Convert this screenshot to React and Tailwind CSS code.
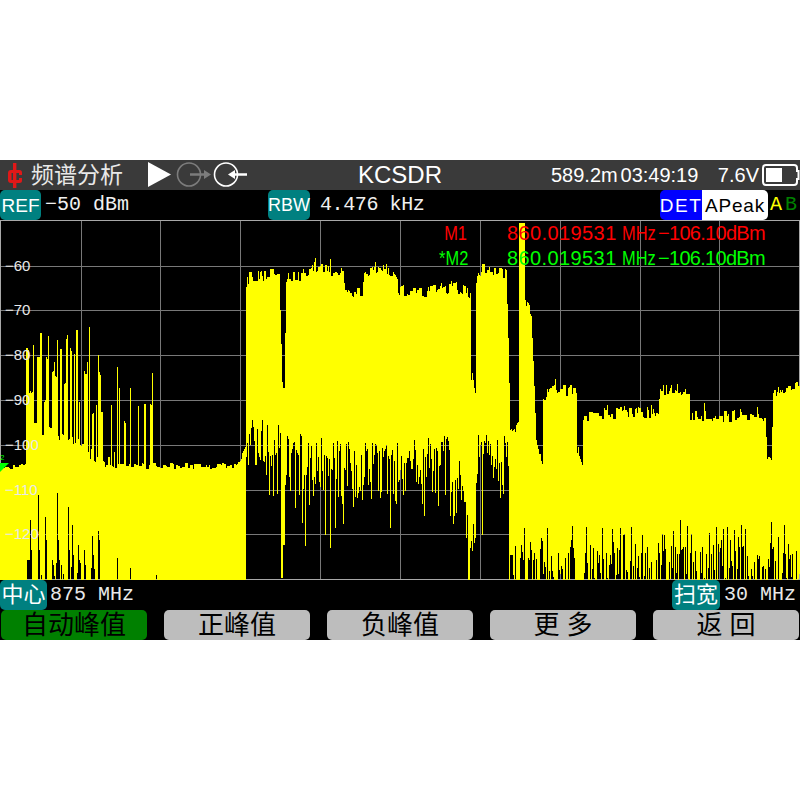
import React from "react";

const sans = "font-['Liberation_Sans','Noto_Sans_CJK_SC',sans-serif]";
const mono = "font-['Liberation_Mono','Noto_Sans_CJK_SC',monospace]";

function rng(seed) {
  let s = seed;
  return () => {
    s = (s * 16807) % 2147483647;
    return s / 2147483647;
  };
}

// [x, value] breakpoints, linear interpolation; values in chart pixels (y-220)
const interp = (pts, x) => {
  for (let i = 1; i < pts.length; i++) {
    if (x <= pts[i][0]) {
      const [a, b] = [pts[i - 1], pts[i]];
      return a[1] + ((b[1] - a[1]) * (x - a[0])) / Math.max(1, b[0] - a[0]);
    }
  }
  return pts[pts.length - 1][1];
};

const TOP = [
  [0, 248], [25, 246], [26, 214], [43, 208], [60, 216], [73, 222], [93, 233], [107, 241], [117, 246],
  [236, 246], [240, 240], [245, 228], [246, 70], [247, 58], [279, 54], [280, 90], [282, 165], [284, 165], [286, 58],
  [300, 55], [325, 48], [343, 55], [345, 72], [362, 74], [364, 55], [378, 48], [392, 55], [400, 70], [430, 72],
  [455, 66], [470, 76], [471, 155], [475, 170], [476, 60], [480, 50], [506, 52], [508, 120], [510, 215], [518, 205],
  [519, 90], [520, 85], [525, 85], [526, 83], [531, 90], [533, 135], [536, 217], [540, 235], [542, 240], [543, 175],
  [560, 170], [576, 170], [577, 230], [582, 245], [583, 195], [625, 192], [658, 192], [660, 172], [689, 170],
  [690, 196], [765, 196], [767, 240], [771, 242], [773, 175], [799, 168],
];
// lowest yellow edge of the main bands (chart pixels)
const BOT = [
  [0, 360], [245, 360], [246, 195], [279, 205], [286, 215], [300, 212], [340, 222], [400, 222],
  [450, 215], [462, 245], [470, 310], [475, 350], [476, 210], [508, 215], [509, 360],
];

// [from, to, top] comb of the left-hand signals
const SPIKES = [
  [26, 28, 128], [29, 32, 170], [33, 33, 122], [37, 39, 135], [40, 41, 110], [44, 45, 180], [46, 47, 135], [48, 48, 115],
  [52, 53, 150], [54, 54, 140], [55, 56, 155], [57, 57, 117], [60, 61, 126], [64, 65, 160], [66, 67, 115], [70, 71, 128],
  [74, 74, 132], [76, 77, 108], [79, 79, 180], [84, 86, 150], [87, 87, 141], [89, 89, 104], [92, 93, 190], [96, 96, 185],
  [98, 98, 132], [99, 100, 152], [101, 102, 190], [111, 111, 185], [117, 117, 144], [119, 119, 165], [125, 125, 200],
  [130, 130, 168], [138, 138, 184], [144, 145, 180], [150, 151, 181], [152, 152, 151], [124, 124, 200], [114, 114, 230],
  [519, 524, 3],
];
// black teeth rising from the bottom of the left area: [x, lowest yellow]
const TEETH = {
  27: 340, 29: 340, 30: 300, 31: 330, 38: 275, 39: 330, 45: 297, 46: 320, 52: 340, 53: 345, 57: 273, 58: 320, 61: 345,
  68: 287, 69: 330, 72: 305, 73: 335, 78: 325, 79: 340, 84: 330, 85: 345, 92: 316, 93: 335, 98: 311, 99: 320, 117: 338,
  130: 348, 156: 355,
};

function Spectrum() {
  const r = rng(48271);
  let d = "";
  let clump = 0;
  let hold = 0;
  for (let x = 0; x < 800; x++) {
    if (hold <= 0) {
      hold = 1 + Math.floor(r() * 3);
      clump = r();
    }
    hold--;
    let top = interp(TOP, x);
    const amp = x < 26 || (x >= 110 && x < 246) ? 6 : x < 110 ? 16 : 13;
    top += clump * amp - amp / 2;
    const sp = SPIKES.find((s) => x >= s[0] && x <= s[1]);
    if (sp) top = sp[0] === 519 ? sp[2] : sp[2] + r() * 4;
    if (x > 246 && x < 509 && r() < 0.12) top -= r() * 9;
    if (x > 543 && r() < 0.1) top -= r() * 9;

    let bot = interp(BOT, x);
    if (x < 246) {
      bot = TEETH[x] || 360;
      if (!TEETH[x] && x > 26 && x < 100 && r() < 0.25) bot = 338 + r() * 22;
    } else if (x < 509) {
      bot += r() * 22;
      const q = r();
      if (q < 0.45) bot += 10 + r() * 35;
      else if (q < 0.55) bot += 35 + r() * 40;
      else if (q < 0.57) bot += 60 + r() * 50;
      if (x === 281 || x === 282) bot = 358;
      if (x === 283 || x === 284) bot = 325;
      if (x === 285) bot = 265;
      if (x >= 470 && x <= 475) bot = 300 + r() * 55;
    } else {
      bot = 360;
      if (x >= 510 && x <= 512) bot = 335;
      const q = r();
      if (x > 512) {
        if (q < 0.45) bot = 325 + r() * 35;
        else if (q < 0.6) bot = 305 + r() * 30;
        else if (q < 0.64) bot = 295 + r() * 20;
      }
      if (x >= 576 && x <= 582) bot = 360;
    }
    d += `M${x + 0.5} ${top.toFixed(0)}V${bot.toFixed(0)}`;
  }
  return <path d={d} stroke="#ffff00" strokeWidth="1" shapeRendering="crispEdges" fill="none" />;
}

const H = [46, 90, 135, 180, 225, 270, 314];
const V = [81, 160, 240, 320, 400, 480, 560, 640, 719];
const AXIS = [
  ["−60", 46], ["−70", 90], ["−80", 135], ["−90", 180], ["−100", 225], ["−110", 270], ["−120", 314],
];

function MarkerRow({ name, className }) {
  return (
    <div className={`absolute left-[433px] flex items-baseline whitespace-nowrap text-[20px] leading-[24px] ${sans} ${className}`}>
      <span className="w-[34px] origin-right scale-x-[0.82] text-right">{name}</span>
      <span className="ml-[40px] w-[115px] tracking-[0.4px]">860.019531</span>
      <span className="w-[36px] origin-left scale-x-[0.82]">MHz</span>
      <span className="tracking-[-0.7px]">−106.10dBm</span>
    </div>
  );
}

function Chart() {
  return (
    <div className="relative h-[360px] w-full overflow-hidden bg-black">
      <svg width="800" height="360" viewBox="0 0 800 360" className="block">
        <rect x="0" y="0" width="800" height="1" fill="#a8a8a8" />
        <rect x="0" y="359" width="800" height="1" fill="#a8a8a8" />
        <rect x="0" y="0" width="1" height="360" fill="#a8a8a8" />
        <rect x="799" y="0" width="1" height="360" fill="#a8a8a8" />
        <g fill="#787878" shapeRendering="crispEdges">
          {H.map((y) => <rect key={y} x="1" y={y} width="798" height="1" />)}
          {V.map((x) => <rect key={x} x={x} y="1" width="1" height="358" />)}
        </g>
        <Spectrum />
        <path d="M0 243L9 243L0 252Z" fill="#00ff00" />
      </svg>
      <span className={`absolute left-0 top-[234px] text-[8px] leading-none text-[#00ff00] ${sans}`}>2</span>
      {AXIS.map(([t, y]) => (
        <span
          key={t}
          className={`absolute left-[5px] text-[15px] leading-none text-[#e8e8e8] ${sans}`}
          style={{ top: y - 8 }}
        >
          {t}
        </span>
      ))}
      <MarkerRow name="M1" className="top-[1px] text-[#ff0000]" />
      <MarkerRow name="*M2" className="top-[26px] text-[#00ff00]" />
    </div>
  );
}

function Logo() {
  return (
    <svg width="18" height="28" viewBox="0 0 18 28" className="ml-[6px] shrink-0">
      <g fill="#e01818">
        <rect x="7" y="2" width="3.4" height="25" />
        <path d="M8 9H5a3 3 0 0 0-3 3v7a3 3 0 0 0 3 3h3v-3H5.5v-7H8Z" />
        <path d="M10 9h3.5a2.5 2.5 0 0 1 2.5 2.5V14h-3v-2h-3Zm0 13h3.5a2.5 2.5 0 0 0 2.5-2.5V17h-3v2h-3Z" />
      </g>
    </svg>
  );
}

function StatusIcons() {
  return (
    <svg width="100" height="30" viewBox="0 0 100 30" className="ml-[25px] shrink-0">
      <path d="M0 2L23 14.5L0 27Z" fill="#ffffff" />
      <circle cx="41" cy="14.5" r="11.5" fill="none" stroke="#7c7c7c" strokeWidth="1.6" />
      <path d="M42 14.5H57" stroke="#7c7c7c" strokeWidth="2.5" />
      <path d="M56 10L63 14.5L56 19Z" fill="#7c7c7c" />
      <circle cx="78" cy="14.5" r="11.5" fill="none" stroke="#ffffff" strokeWidth="1.6" />
      <path d="M85 14.5H99" stroke="#ffffff" strokeWidth="2.5" />
      <path d="M87 10L80 14.5L87 19Z" fill="#ffffff" />
    </svg>
  );
}

function Battery() {
  return (
    <svg width="38" height="22" viewBox="0 0 38 22" className="ml-[3px] shrink-0">
      <path d="M32 1H4a3 3 0 0 0-3 3v14a3 3 0 0 0 3 3h28a3 3 0 0 0 3-3v-3h1.5V7H35V4a3 3 0 0 0-3-3Z" fill="none" stroke="#ffffff" strokeWidth="2" />
      <rect x="4" y="4" width="16" height="14" fill="#ffffff" />
    </svg>
  );
}

const Badge = ({ children, className = "" }) => (
  <div className={`flex h-[30px] items-center justify-center whitespace-nowrap rounded-[5px] bg-[#008080] text-white ${className}`}>
    {children}
  </div>
);

const BUTTONS = ["自动峰值", "正峰值", "负峰值", "更 多", "返 回"];

export default function App() {
  return (
    <div className={`flex h-[800px] w-[800px] items-center bg-white ${sans}`}>
      <div className="flex h-[480px] w-[800px] flex-col bg-black">
        {/* title bar */}
        <div className="flex h-[30px] items-center whitespace-nowrap bg-[#3a3a3a] text-white">
          <Logo />
          <span className="ml-[7px] w-[92px] text-[23px] leading-none text-[#e8e8e8]">频谱分析</span>
          <StatusIcons />
          <span className="ml-[110px] w-[83px] text-[24px] leading-none">KCSDR</span>
          <span className="ml-[110px] w-[70px] text-[20px] leading-none">589.2m</span>
          <span className="w-[98px] text-[20px] leading-none">03:49:19</span>
          <span className="text-[20px] leading-none">7.6V</span>
          <Battery />
        </div>
        {/* settings row */}
        <div className="flex h-[30px] items-center whitespace-nowrap text-[20px] leading-none">
          <Badge className="w-[41px] text-[19px]">REF</Badge>
          <span className={`ml-[4px] w-[223px] text-[20px] text-[#f0f0f0] ${mono}`}>−50 dBm</span>
          <Badge className="w-[42px] text-[18px]">RBW</Badge>
          <span className={`ml-[10px] w-[340px] text-[20px] tracking-[-0.4px] text-[#f0f0f0] ${mono}`}>4.476 kHz</span>
          <div className="flex h-[30px] w-[42px] items-center justify-center rounded-l-[5px] bg-[#0000ff] text-[19px] tracking-[1.5px] text-white">DET</div>
          <div className="flex h-[30px] w-[66px] items-center justify-center rounded-r-[5px] bg-white text-[19px] tracking-[0.8px] text-black">APeak</div>
          <span className={`ml-[2px] w-[15px] text-[#ffff00] ${mono}`}>A</span>
          <span className={`text-[#008000] ${mono}`}>B</span>
        </div>
        <Chart />
        {/* centre / span row */}
        <div className={`flex h-[30px] items-center justify-between whitespace-nowrap text-[20px] leading-none text-[#e8e8e8] ${mono}`}>
          <div className="flex items-center">
            <Badge className={`w-[47px] text-[22px] ${sans}`}>中心</Badge>
            <span className="ml-[3px]">875 MHz</span>
          </div>
          <div className="flex items-center pr-[4px]">
            <Badge className={`w-[48px] text-[22px] ${sans}`}>扫宽</Badge>
            <span className="ml-[4px]">30 MHz</span>
          </div>
        </div>
        {/* soft keys */}
        <div className="flex h-[30px] gap-[17px] px-[1px]">
          {BUTTONS.map((b, i) => (
            <div
              key={b}
              className={`flex h-[30px] w-[146px] items-center justify-center rounded-[5px] text-[26px] leading-none text-black ${
                i === 0 ? "bg-[#008000]" : "bg-[#bdbdbd]"
              }`}
            >
              {b}
            </div>
          ))}
        </div>
      </div>
    </div>
  );
}
